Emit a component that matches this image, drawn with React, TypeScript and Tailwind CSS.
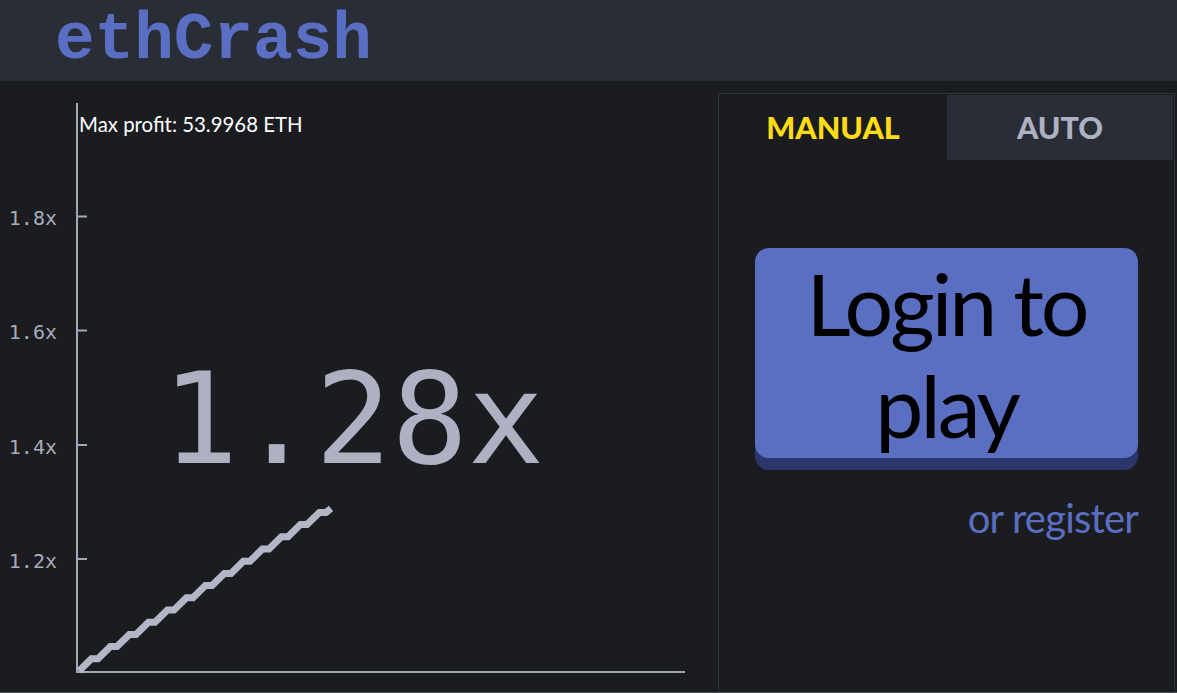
import React from "react";

const TICKS = [
  { y: 216.5, label: "1.8x" },
  { y: 330.5, label: "1.6x" },
  { y: 445, label: "1.4x" },
  { y: 559, label: "1.2x" },
];

// stair-stepped growth line, from the origin up to the current multiplier
function curvePath() {
  let x = 79;
  let y = 671;
  let d = `M${x} ${y}`;
  for (let i = 0; i < 13; i++) {
    x += 12.4;
    y -= 12.2;
    d += ` L${x.toFixed(1)} ${y.toFixed(1)}`;
    x += 6.6;
    d += ` L${x.toFixed(1)} ${y.toFixed(1)}`;
  }
  d += ` L${(x + 5).toFixed(1)} ${(y - 4).toFixed(1)}`;
  return d;
}

function Chart() {
  return (
    <div className="relative h-full w-[718px] shrink-0">
      <svg
        className="absolute inset-0"
        width={718}
        height={611}
        viewBox="0 81 718 611"
      >
        <line x1={77} y1={103} x2={77} y2={673} stroke="#a4a7b6" strokeWidth={2} />
        <line x1={76} y1={672} x2={685} y2={672} stroke="#a4a7b6" strokeWidth={2} />
        {TICKS.map((t) => (
          <g key={t.label}>
            <line x1={77} y1={t.y} x2={87} y2={t.y} stroke="#a4a7b6" strokeWidth={2} />
            <text
              x={57}
              y={t.y + 8.5}
              textAnchor="end"
              fill="#a9acbb"
              fontSize={20}
              fontFamily='"DejaVu Sans Mono", monospace'
            >
              {t.label}
            </text>
          </g>
        ))}
        <path
          d={curvePath()}
          fill="none"
          stroke="#b3b6c6"
          strokeWidth={7}
          strokeLinejoin="miter"
        />
      </svg>

      <div className="absolute left-[79px] top-[33px] font-['Lato',sans-serif] text-[20.4px] leading-none text-white">
        Max profit: 53.9968 ETH
      </div>

      <div className="absolute left-[162px] top-[275px] font-['DejaVu_Sans_Mono',monospace] text-[127px] leading-none text-[#aeb1c2]">
        1.28x
      </div>
    </div>
  );
}

function BetPanel() {
  return (
    <div className="mt-[12px] w-[457px] shrink-0 border border-b-0 border-[#2f333b] p-px">
      <div className="grid h-[65px] grid-cols-2 gap-px font-['Lato',sans-serif] text-[30.5px] font-black uppercase leading-none">
        <div className="flex items-center justify-center text-[#ffdc16]">Manual</div>
        <div className="flex items-center justify-center bg-[#292d36] text-[#aeb1c2]">Auto</div>
      </div>

      <div className="mx-[35px] mt-[88px] rounded-[14px] bg-[#2b376c] pb-[12px]">
        <button
          type="button"
          className="block h-[210px] w-full rounded-[14px] bg-[#5a6fc2] pt-px text-center font-['Lato',sans-serif] text-[86px] leading-[102px] tracking-[-0.035em] text-black"
        >
          Login to play
        </button>
      </div>

      <div className="mr-[35px] mt-[28px] text-right font-['Lato',sans-serif] text-[40px] leading-none tracking-[-0.02em] text-[#5a6fc2]">
        or register
      </div>
    </div>
  );
}

export default function App() {
  return (
    <div className="h-[693px] w-full overflow-hidden bg-[#1b1c20]">
      <header className="flex h-[81px] items-center bg-[#292d36] pl-[55px]">
        <span className="font-['Liberation_Mono',monospace] text-[66px] font-bold leading-none text-[#5a6fc4]">
          ethCrash
        </span>
      </header>
      <main className="flex h-[611px]">
        <Chart />
        <BetPanel />
      </main>
      <div className="border-t border-[#4b4e57]" />
    </div>
  );
}
